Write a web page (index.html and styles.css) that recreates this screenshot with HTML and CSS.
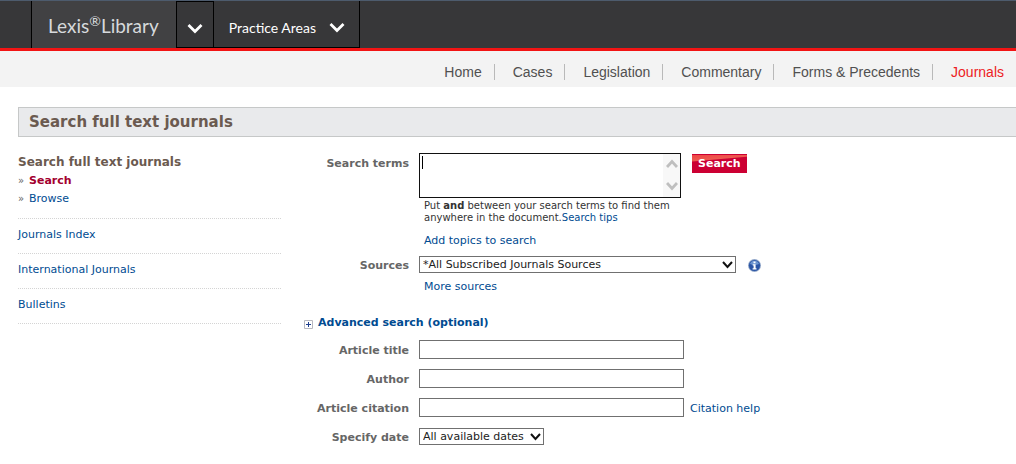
FILE: index.html
```html
<!DOCTYPE html>
<html lang="en">
<head>
<meta charset="utf-8">
<title>Search full text journals</title>
<link rel="stylesheet" href="styles.css">
</head>
<body>
<header class="topbar">
  <a class="brand" href="#">Lexis<span class="reg">®</span>Library</a>
  <button class="brand-menu" type="button" aria-label="Products">
    <svg width="16" height="12" viewBox="0 0 16 12"><path d="M1.500 2l6.500 6.500L14.500 2" fill="none" stroke="#fff" stroke-width="2.800"/></svg>
  </button>
  <button class="areas" type="button">
    <span>Practice Areas</span>
    <svg width="16" height="12" viewBox="0 0 16 12"><path d="M1.500 2l6.500 6.500L14.500 2" fill="none" stroke="#fff" stroke-width="2.800"/></svg>
  </button>
</header>
<nav class="tabs">
  <a href="#">Home</a>
  <a href="#">Cases</a>
  <a href="#">Legislation</a>
  <a href="#">Commentary</a>
  <a href="#">Forms &amp; Precedents</a>
  <a class="current" href="#">Journals</a>
</nav>
<h1 class="page-title">Search full text journals</h1>
<div class="columns">
  <aside class="sidebar">
    <section class="side-main">
      <h2>Search full text journals</h2>
      <ul>
        <li><span class="raquo">»</span><a class="active" href="#">Search</a></li>
        <li><span class="raquo">»</span><a href="#">Browse</a></li>
      </ul>
    </section>
    <a class="side-link" href="#">Journals Index</a>
    <a class="side-link" href="#">International Journals</a>
    <a class="side-link" href="#">Bulletins</a>
  </aside>
  <form class="search-form">
    <div class="row terms-row">
      <label for="terms">Search terms</label>
      <div class="terms-box">
        <textarea id="terms"></textarea>
        <span class="caret"></span>
        <span class="scroller">
          <svg width="12" height="10" viewBox="0 0 12 10"><path d="M1 8l5-5.500L11 8" fill="none" stroke="#bfbfbf" stroke-width="2.800"/></svg>
          <svg width="12" height="10" viewBox="0 0 12 10"><path d="M1 2l5 5.500L11 2" fill="none" stroke="#bfbfbf" stroke-width="2.800"/></svg>
        </span>
      </div>
      <button class="search-btn" type="submit">Search</button>
    </div>
    <p class="hint">Put <b>and</b> between your search terms to find them<br>anywhere in the document.<a href="#">Search tips</a></p>
    <a class="under topics" href="#">Add topics to search</a>
    <div class="row">
      <label for="sources">Sources</label>
      <div class="select-box sources-box">
        <select id="sources"><option>*All Subscribed Journals Sources</option></select>
        <svg class="arrow" width="11" height="8" viewBox="0 0 11 8"><path d="M1 1l4.500 5L10 1" fill="none" stroke="#111" stroke-width="2"/></svg>
      </div>
      <button class="info" type="button" aria-label="Source information">
        <svg width="13" height="13" viewBox="0 0 13 13">
          <circle cx="6.500" cy="6.500" r="6.500" fill="#8fa5c8"/>
          <circle cx="6.500" cy="6.500" r="5.600" fill="#2b55a5"/>
          <path d="M2 5a4.800 4.800 0 0 1 9 0q-4.500 2-9 0z" fill="#6d95d0"/>
          <path d="M5.500 2.500h2v1.700h-2zM4.700 5.200h2.900v4h.9v1.200H4.600V9.200h1V6.400h-.9z" fill="#fff"/>
        </svg>
      </button>
    </div>
    <a class="under more" href="#">More sources</a>
    <a class="advanced" href="#">
      <svg width="9" height="9" viewBox="0 0 9 9"><path d="M.5.500h8v8h-8z" fill="#fff" stroke="#b8b8c0"/><path d="M2 4.500h5M4.500 2v5" stroke="#1f3f8f"/></svg>
      <span>Advanced search (optional)</span>
    </a>
    <div class="row field-row">
      <label for="title">Article title</label>
      <input id="title" type="text">
    </div>
    <div class="row field-row">
      <label for="author">Author</label>
      <input id="author" type="text">
    </div>
    <div class="row field-row">
      <label for="citation">Article citation</label>
      <input id="citation" type="text">
      <a class="help" href="#">Citation help</a>
    </div>
    <div class="row">
      <label for="date">Specify date</label>
      <div class="select-box date-box">
        <select id="date"><option>All available dates</option></select>
        <svg class="arrow" width="11" height="8" viewBox="0 0 11 8"><path d="M1 1l4.500 5L10 1" fill="none" stroke="#111" stroke-width="2"/></svg>
      </div>
    </div>
  </form>
</div>
</body>
</html>
```

FILE: styles.css
```css
* {
  box-sizing: border-box;
}

body {
  margin: 0;
  background: #fff;
  color: #333;
  font: 11px/18px Verdana, "DejaVu Sans", sans-serif;
}

a {
  color: #004b91;
  text-decoration: none;
}

button,
input,
select,
textarea {
  margin: 0;
  font: inherit;
}

svg {
  display: block;
}

.topbar {
  display: flex;
  height: 51px;
  padding-left: 31px;
  background: #373739;
  border-top: 1px solid #4d5b6d;
  border-bottom: 3px solid #f21414;
  font-family: Lato, sans-serif;
}

.brand {
  padding: 0 17px 0 16px;
  border-left: 1px solid #000;
  background: #414143;
  color: #d6d9dc;
  font-size: 19px;
  line-height: 50px;
  white-space: nowrap;
}

.reg {
  font-size: 14px;
  line-height: 0;
  vertical-align: 7px;
}

.brand-menu {
  display: flex;
  align-items: center;
  justify-content: center;
  width: 38px;
  padding: 9px 0 0;
  border: 1px solid #000;
  background: #373739;
}

.areas {
  display: flex;
  align-items: center;
  gap: 13px;
  padding: 8px 14px 0 15px;
  border: solid #000;
  border-width: 0 1px 1px 0;
  background: #373739;
  color: #fff;
  font-size: 14px;
}

.tabs {
  display: flex;
  justify-content: flex-end;
  align-items: center;
  height: 36px;
  padding: 6px 12px 0 0;
  background: #f3f3f3;
  font: 14px/16px Arial, "Liberation Sans", sans-serif;
}

.tabs a {
  margin-right: 18px;
  padding-right: 12px;
  border-right: 1px solid #b9b9b9;
  color: #505050;
}

.tabs .current {
  margin: 0;
  padding: 0;
  border: 0;
  color: #ed1c24;
}

.page-title {
  margin: 20px 0 0 18px;
  padding: 0 10px;
  border: 1px solid #c6c8c8;
  border-right: 0;
  background: #e9eaec;
  color: #6b5a50;
  font-size: 15px;
  line-height: 28px;
}

.columns {
  display: flex;
  gap: 23px;
  padding: 16px 18px;
}

.sidebar {
  flex: 0 0 263px;
}

.side-main {
  padding-bottom: 10px;
  border-bottom: 1px dotted #d4d4d4;
}

.side-main h2 {
  margin: 0;
  color: #6b5a50;
  font-size: 12px;
  line-height: 18px;
}

.side-main ul {
  margin: 0;
  padding: 1px 0 0;
  list-style: none;
}

.raquo {
  display: inline-block;
  width: 11px;
  color: #666;
  font-size: 10px;
}

.side-main .active {
  color: #a3002e;
  font-weight: bold;
}

.side-link {
  display: block;
  padding: 7px 0 9px;
  border-bottom: 1px dotted #d4d4d4;
}

.search-form {
  flex: 1;
}

.row {
  display: flex;
  align-items: center;
  height: 17px;
}

.row label {
  width: 105px;
  margin-right: 10px;
  padding-top: 2px;
  color: #666;
  font-weight: bold;
  text-align: right;
}

.terms-row {
  align-items: flex-start;
  height: 45px;
}

.terms-box {
  position: relative;
  width: 262px;
}

textarea {
  display: block;
  width: 100%;
  height: 45px;
  padding: 2px;
  border: 1px solid #111;
  border-radius: 0;
  background: #fff;
  overflow: hidden;
  resize: none;
}

.caret {
  position: absolute;
  top: 3px;
  left: 3px;
  width: 1px;
  height: 13px;
  background: #000;
}

.scroller {
  position: absolute;
  top: 1px;
  right: 1px;
  bottom: 1px;
  display: flex;
  flex-direction: column;
  justify-content: space-between;
  align-items: center;
  width: 17px;
  padding: 5px 0 6px;
  background: #f8f8f8;
}

.search-btn {
  height: 19px;
  margin: 1px 0 0 11px;
  padding: 0 6px;
  border: 1px solid #cc0033;
  border-width: 1px 0;
  background: linear-gradient(175deg, #ee4444 0, #ee5a50 6px, #cc0033 7px);
  color: #fff;
  font-weight: bold;
  line-height: 17px;
}

.hint {
  margin: 2px 0 0 120px;
  font-size: 10px;
  line-height: 12px;
}

.under {
  display: block;
  width: max-content;
  margin-left: 120px;
}

.topics {
  margin-top: 8px;
  margin-bottom: 6px;
}

.more {
  margin-top: 5px;
}

.select-box {
  position: relative;
}

.sources-box {
  width: 317px;
}

.date-box {
  width: 125px;
}

.select-box select {
  display: block;
  width: 100%;
  height: 17px;
  padding: 0 3px;
  border: 1px solid #707070;
  border-radius: 0;
  background: #fff;
  color: #222;
  line-height: 15px;
  appearance: none;
}

.arrow {
  position: absolute;
  top: 5px;
  right: 3px;
  pointer-events: none;
}

.info {
  margin-left: 12px;
  padding: 2px 0 0;
  border: 0;
  background: none;
}

.advanced {
  display: flex;
  align-items: center;
  gap: 5px;
  width: max-content;
  margin: 18px 0 8px;
  font-weight: bold;
}

.advanced svg {
  margin-top: 2px;
}

.field-row {
  height: 19px;
  margin-bottom: 10px;
}

.field-row:nth-last-child(2) {
  margin-bottom: 11px;
}

.field-row input {
  width: 265px;
  height: 19px;
  padding: 0 3px;
  border: 1px solid #707070;
  border-radius: 0;
  background: #fff;
}

.help {
  margin-left: 6px;
  padding-top: 2px;
}
```
